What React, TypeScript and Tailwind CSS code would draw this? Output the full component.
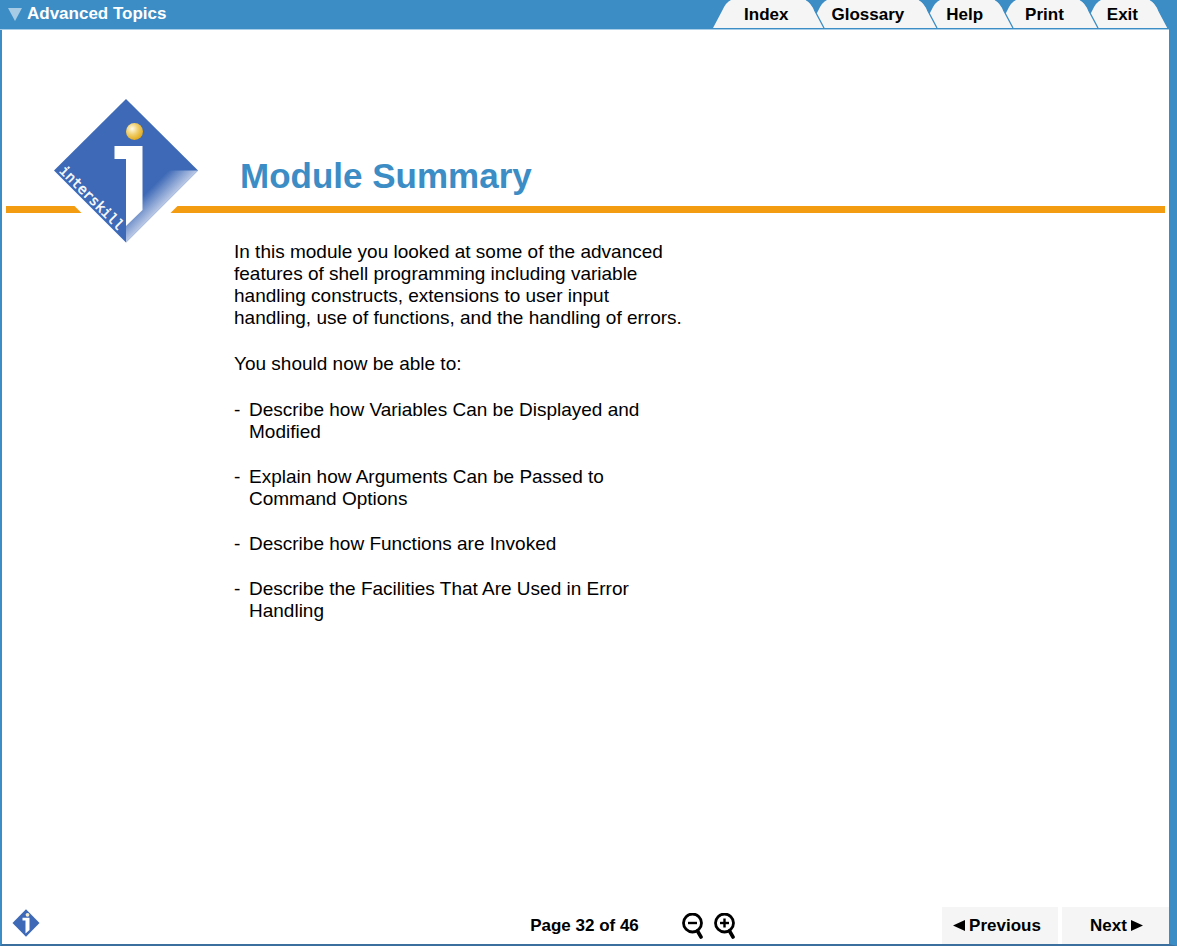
import React from "react";

type TabItem = { label: string; place: string; pad: string };

const tabs: TabItem[] = [
  { label: "Index", place: "z-50", pad: "pl-[9px] pr-[15px]" },
  { label: "Glossary", place: "z-40 -ml-4", pad: "pr-3" },
  { label: "Help", place: "z-30 -ml-4", pad: "pl-[2px] pr-[9px]" },
  { label: "Print", place: "z-20 -ml-4", pad: "pl-[5px] pr-[13px]" },
  { label: "Exit", place: "z-10 -ml-4", pad: "pl-[2px] pr-[9px]" },
];

const outcomes: string[] = [
  "Describe how Variables Can be Displayed and Modified",
  "Explain how Arguments Can be Passed to Command Options",
  "Describe how Functions are Invoked",
  "Describe the Facilities That Are Used in Error Handling",
];

function Tab({ label, place, pad }: TabItem) {
  return (
    <button type="button" className={`relative flex h-7 text-[17px] font-bold leading-7 ${place}`}>
      <svg width="22" height="28" viewBox="0 0 22 28" aria-hidden="true">
        <path d="M0 28L9 11Q13 2 18 0H22V28Z" fill="#f5f5f5" />
      </svg>
      <span className={`h-7 bg-[#f5f5f5] pt-px ${pad}`}>{label}</span>
      <svg width="22" height="28" viewBox="0 0 22 28" aria-hidden="true">
        <path d="M0 0H3Q9 3 12 11L21 28H0Z" fill="#f5f5f5" />
        <path d="M3 -.5Q9 3 12 11L21 28" fill="none" stroke="#3c8dc5" strokeWidth="1.300" />
      </svg>
    </button>
  );
}

function Logo() {
  return (
    <svg
      className="relative z-10 -mb-[38px] shrink-0 overflow-visible"
      width="146"
      height="146"
      viewBox="0 0 146 146"
      role="img"
      aria-label="interskill"
    >
      <defs>
        <linearGradient id="fold" gradientUnits="userSpaceOnUse" x1="94" y1="94" x2="110" y2="110">
          <stop offset="0" stopColor="#3d69b6" />
          <stop offset="1" stopColor="#c6d2ea" />
        </linearGradient>
        <radialGradient id="dot" cx="36%" cy="34%" r="68%">
          <stop offset="0" stopColor="#fffbe8" />
          <stop offset=".5" stopColor="#f0d070" />
          <stop offset="1" stopColor="#e3ab1b" />
        </radialGradient>
      </defs>
      <path d="M73 -14.500L160 72.500L73 159.500L-14 72.500Z" fill="#fff" />
      <path d="M73 1L145 72.500L73 144.500L1 72.500Z" fill="#3d69b6" />
      <path d="M73 144.500L145 72.500H112L73 112Z" fill="url(#fold)" />
      <path d="M61.500 48H89.500V112L73 128V61H61.500Z" fill="#fff" />
      <circle cx="81.500" cy="33.500" r="8.500" fill="url(#dot)" />
      <text
        transform="translate(5.500 73.500) rotate(45)"
        fill="#fff"
        stroke="#fff"
        strokeWidth=".4"
        fontFamily="DejaVu Sans Mono, monospace"
        fontSize="14"
      >
        interskill
      </text>
    </svg>
  );
}

function SmallLogo() {
  return (
    <svg width="28" height="28" viewBox="0 0 28 28" role="img" aria-label="interskill home">
      <path d="M14 .3L27.500 14L14 27.700L.5 14Z" fill="#3d69b6" />
      <path d="M10.500 8.800H17.500V21L13.500 24.500V11.500H10.500Z" fill="#fff" />
      <circle cx="15.500" cy="5.800" r="1.900" fill="#f4ecd0" />
    </svg>
  );
}

function Magnifier({ plus = false }: { plus?: boolean }) {
  return (
    <svg width="22" height="26" viewBox="0 0 22 26" fill="none" stroke="#000" aria-hidden="true">
      <circle cx="10.500" cy="10" r="9" strokeWidth="2.800" />
      <path d="M15.500 18L19 24" strokeWidth="3.600" strokeLinecap="round" />
      <path d="M6 10H15" strokeWidth="2.400" />
      {plus && <path d="M10.500 5.500V14.500" strokeWidth="2.400" />}
    </svg>
  );
}

export default function App() {
  return (
    <div className="flex min-h-screen flex-col bg-white pb-px font-['Liberation_Sans',Arial,sans-serif] text-black">
      <div className="flex grow flex-col border-b-2 border-l-2 border-r-8 border-b-[#3b6f9e] border-l-[#3c8dc5] border-r-[#3c8dc5]">
        <header className="-ml-0.5 flex h-[30px] justify-between border-b border-[#a9cfe8] bg-[#3c8dc5]">
          <button type="button" className="flex h-7 items-center gap-[5px] pl-2 text-[17px] font-bold text-white">
            <svg width="14" height="13" viewBox="0 0 14 13" aria-hidden="true">
              <path d="M0 0H14L7 13Z" fill="#a5cbe5" />
            </svg>
            Advanced Topics
          </button>
          <nav className="flex" aria-label="Course tools">
            {tabs.map((tab) => (
              <Tab key={tab.label} {...tab} />
            ))}
          </nav>
        </header>

        <main className="grow">
          <div className="px-1 pt-[68px]">
            <div className="flex items-end pl-[47px]">
              <Logo />
              <h1 className="pb-[10px] pl-[41px] text-[35px] font-bold leading-10 text-[#3c8dc5]">Module Summary</h1>
            </div>
            <div className="h-[7px] bg-[#f39c12]" />
          </div>

          <div className="ml-[232px] mt-7 flex max-w-[452px] flex-col gap-6 text-[19px] leading-[22px]">
            <p>
              In this module you looked at some of the advanced features of shell programming including variable
              handling constructs, extensions to user input handling, use of functions, and the handling of errors.
            </p>
            <p>You should now be able to:</p>
            <ul className="flex max-w-[415px] flex-col gap-[23px]">
              {outcomes.map((text) => (
                <li key={text} className="flex">
                  <span className="w-[15px] shrink-0">-</span>
                  <span>{text}</span>
                </li>
              ))}
            </ul>
          </div>
        </main>

        <footer className="grid grid-cols-[45%_1fr_auto] text-[17px] font-bold">
          <div className="flex items-center pb-1.5 pl-[10px]">
            <SmallLogo />
          </div>
          <div className="flex items-center pl-[3px]">
            <span>Page 32 of 46</span>
            <button type="button" aria-label="Zoom out" className="ml-[43px]">
              <Magnifier />
            </button>
            <button type="button" aria-label="Zoom in" className="ml-[10px]">
              <Magnifier plus />
            </button>
          </div>
          <div className="flex gap-1">
            <button type="button" className="flex h-[37px] w-[116px] items-center justify-center gap-1 bg-[#f5f5f5] pr-1.5">
              <svg width="12" height="11" viewBox="0 0 12 11" aria-hidden="true">
                <path d="M12 0V11L0 5.500Z" />
              </svg>
              Previous
            </button>
            <button type="button" className="flex h-[37px] w-[107px] items-center justify-center gap-1 bg-[#f5f5f5] pl-0.5">
              Next
              <svg width="12" height="11" viewBox="0 0 12 11" aria-hidden="true">
                <path d="M0 0V11L12 5.500Z" />
              </svg>
            </button>
          </div>
        </footer>
      </div>
    </div>
  );
}
